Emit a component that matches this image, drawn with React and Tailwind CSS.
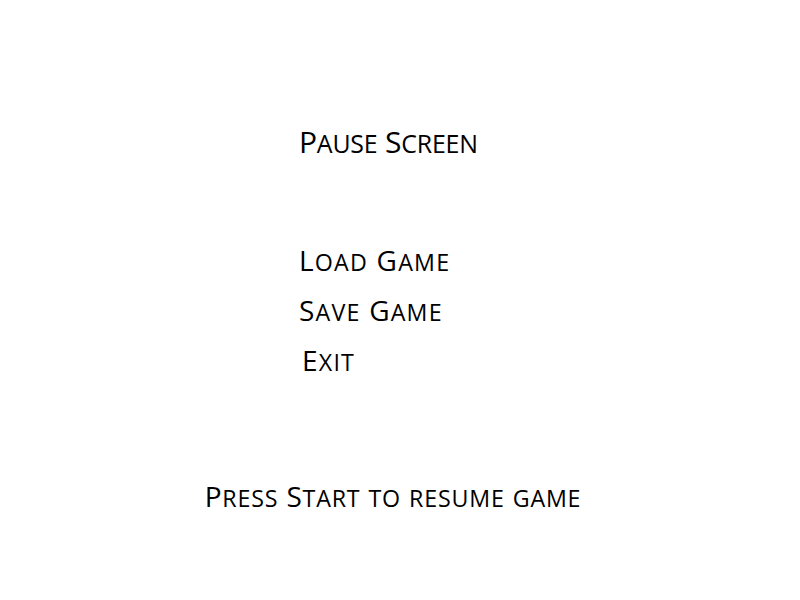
import React from 'react';

const items = ['Load Game', 'Save Game', 'Exit'];

// Small caps drawn by hand: capitals full size, lowercase as smaller capitals
function SmallCaps({ text }) {
  return (
    <>
      {text.split('').map((ch, i) =>
        ch !== ch.toUpperCase() ? (
          <span key={i} className="text-[0.83em] leading-[0] uppercase">
            {ch}
          </span>
        ) : (
          <span key={i}>{ch}</span>
        )
      )}
    </>
  );
}

function App() {
  return (
    <div className="w-[800px] h-[600px] bg-white text-black font-['Open_Sans',sans-serif] flex flex-col">
      {/* Title */}
      <div className="pt-[117px] pl-[299px] text-[30px] leading-[50px] tracking-[-0.2px]">
        <SmallCaps text="Pause Screen" />
      </div>

      {/* Menu */}
      <ul className="mt-[68px] pl-[299px] text-[28px] leading-[50px] tracking-[1.2px]">
        {items.map((item) => (
          <li key={item} className={item === 'Exit' ? 'pl-[3px]' : ''}>
            <SmallCaps text={item} />
          </li>
        ))}
      </ul>

      {/* Hint */}
      <div className="mt-[86px] pr-[14px] text-center text-[28px] leading-[50px] tracking-[0.8px]">
        <SmallCaps text="Press Start to resume game" />
      </div>
    </div>
  );
}

export default App;
